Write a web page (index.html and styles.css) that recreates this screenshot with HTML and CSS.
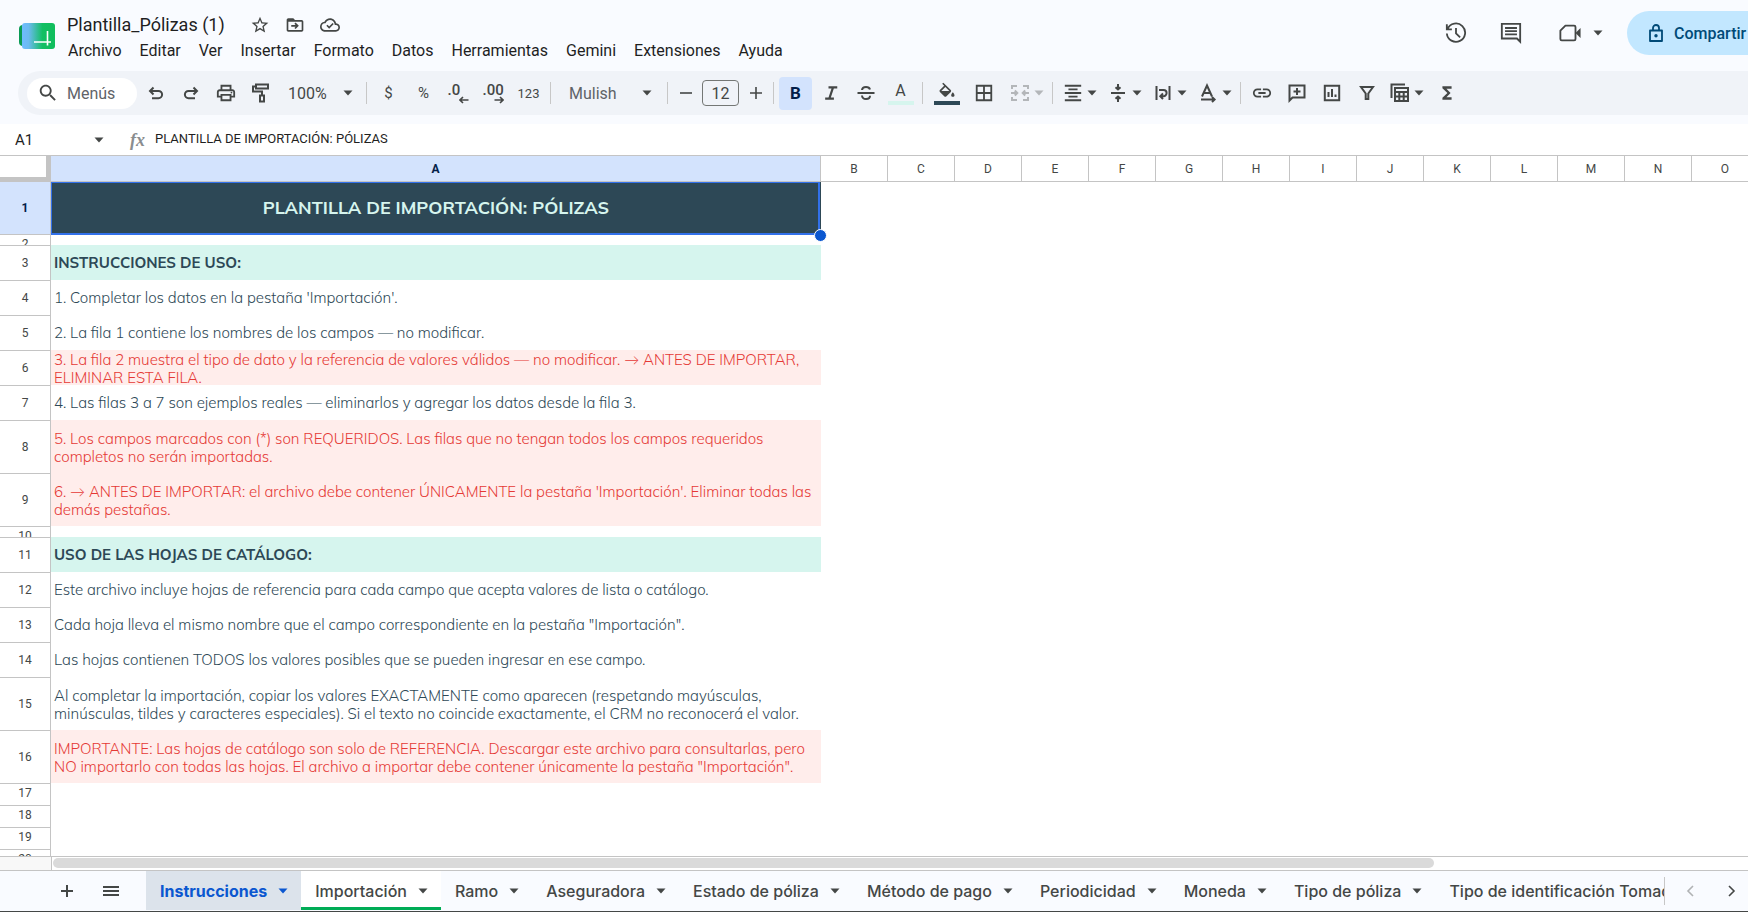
FILE: index.html
```html
<!DOCTYPE html>
<html lang="es">
<head>
    <meta charset="UTF-8">
    <title>Plantilla_Pólizas (1)</title>
    <link rel="stylesheet" href="styles.css">
</head>
<body>

<svg class="defs" aria-hidden="true">
    <symbol id="caret" viewBox="0 0 10 6"><path d="M0.5 0.5h9L5 5.5z"/></symbol>
</svg>

<div class="topbar">
    <header class="header">
        <svg class="logo" viewBox="0 0 36 26">
            <defs>
                <linearGradient id="logoFill" x1="0" y1="0" x2="1" y2="0">
                    <stop offset="0" stop-color="#6fbcff"/>
                    <stop offset="0.2" stop-color="#6cbaf0"/>
                    <stop offset="0.62" stop-color="#12bf63"/>
                    <stop offset="1" stop-color="#10bd5c"/>
                </linearGradient>
            </defs>
            <rect x="0" y="2" width="20" height="21" rx="4" fill="#0a9b55"/>
            <rect x="3" y="0" width="33" height="26" rx="3" fill="url(#logoFill)"/>
            <path d="M15 19h17M28.500 8v14.500" stroke="#fff" stroke-width="1.600" fill="none"/>
        </svg>
        <div class="doc">
            <div class="title-row">
                <h1>Plantilla_Pólizas (1)</h1>
                <button class="title-icon" aria-label="Destacar"><svg viewBox="0 0 24 24"><path d="M22 9.240l-7.190-.620L12 2 9.190 8.630 2 9.240l5.460 4.730L5.820 21 12 17.270 18.180 21l-1.630-7.030L22 9.240zM12 15.400l-3.760 2.270 1-4.280-3.320-2.880 4.380-.380L12 6.100l1.710 4.040 4.380.380-3.320 2.880 1 4.280L12 15.400z"/></svg></button>
                <button class="title-icon" aria-label="Mover"><svg viewBox="0 0 24 24"><path d="M20 6h-8l-2-2H4c-1.100 0-2 .9-2 2v12c0 1.100.9 2 2 2h16c1.100 0 2-.9 2-2V8c0-1.100-.9-2-2-2zm0 12H4V8h16v10z"/><path class="line" d="M7.500 13h7M12 9.800l3.200 3.200-3.200 3.200"/></svg></button>
                <button class="title-icon" aria-label="Guardado"><svg viewBox="0 0 24 24"><path d="M19.350 10.040C18.670 6.590 15.640 4 12 4 9.110 4 6.600 5.640 5.350 8.040 2.340 8.360 0 10.910 0 14c0 3.310 2.690 6 6 6h13c2.760 0 5-2.240 5-5 0-2.640-2.050-4.780-4.650-4.960zM19 18H6c-2.210 0-4-1.790-4-4 0-2.050 1.530-3.760 3.560-3.970l1.070-.110.5-.950C8.080 7.140 9.940 6 12 6c2.620 0 4.880 1.860 5.390 4.430l.3 1.500 1.530.110c1.560.1 2.780 1.410 2.780 2.960 0 1.650-1.350 3-3 3z"/><path class="line" d="M8.300 12.300l2.700 2.700 4.800-4.800"/></svg></button>
            </div>
            <nav class="menu">
                <button>Archivo</button>
                <button>Editar</button>
                <button>Ver</button>
                <button>Insertar</button>
                <button>Formato</button>
                <button>Datos</button>
                <button>Herramientas</button>
                <button>Gemini</button>
                <button>Extensiones</button>
                <button>Ayuda</button>
            </nav>
        </div>
        <div class="actions">
            <button class="action" aria-label="Historial"><svg viewBox="0 0 24 24"><path class="line" d="M2 2.500v5.500h5.500M2.800 7.600A10 10 0 1 1 2 12.500M12 6.500v6l4.500 4.300"/></svg></button>
            <button class="action" aria-label="Comentarios"><svg viewBox="0 0 24 24"><path class="line" d="M2 2h20v19.500L18.500 18H2zM5.500 6.500h13M5.500 10h13M5.500 13.500h13"/></svg></button>
            <button class="action meet" aria-label="Reunión"><svg viewBox="0 0 24 24"><path class="line" d="M7 4h9.500a1.500 1.500 0 0 1 1.500 1.500v13a1.500 1.500 0 0 1-1.500 1.500H3a1.500 1.500 0 0 1-1.500-1.500V9.500z" stroke-linejoin="round"/><path d="M18 12l5.500-5.500v11z"/></svg><svg class="caret"><use href="#caret"/></svg></button>
            <button class="share">
                <svg viewBox="0 0 14 18"><path d="M1 6.500h12v10.500H1zM4 6.500V4a3 3 0 0 1 6 0v2.500" fill="none" stroke="#004a77" stroke-width="1.800" stroke-linejoin="round"/><circle cx="7" cy="11.700" r="1.700" fill="#004a77"/></svg>
                Compartir
            </button>
        </div>
    </header>

    <div class="toolbar">
        <label class="search">
            <svg viewBox="0 0 24 24"><path d="M15.500 14h-.790l-.280-.270C15.410 12.590 16 11.110 16 9.500 16 5.910 13.090 3 9.500 3S3 5.910 3 9.500 5.910 16 9.500 16c1.610 0 3.090-.590 4.230-1.570l.270.280v.790l5 4.990L20.490 19l-4.990-5zm-6 0C7.010 14 5 11.990 5 9.500S7.010 5 9.500 5 14 7.010 14 9.500 11.990 14 9.500 14z"/></svg>
            <input type="text" placeholder="Menús" aria-label="Menús">
        </label>
        <button class="tool" aria-label="Deshacer"><svg viewBox="0 0 20 20"><path class="line" d="M7.500 4.500L4 8l3.500 3.500M4 8h8.500a3.600 3.600 0 0 1 0 7.200H6"/></svg></button>
        <button class="tool" aria-label="Rehacer"><svg viewBox="0 0 20 20"><path class="line" d="M12.500 4.500L16 8l-3.500 3.500M16 8H7.500a3.600 3.600 0 0 0 0 7.200H14"/></svg></button>
        <button class="tool" aria-label="Imprimir"><svg viewBox="1 1 22 22"><path d="M19 8h-1V3H6v5H5c-1.660 0-3 1.340-3 3v6h4v4h12v-4h4v-6c0-1.660-1.340-3-3-3zM8 5h8v3H8V5zm8 12v2H8v-4h8v2zm2-2v-2H6v2H4v-4c0-.550.450-1 1-1h14c.550 0 1 .450 1 1v4h-2z"/><circle cx="18" cy="11.500" r="1"/></svg></button>
        <button class="tool" aria-label="Copiar formato"><svg viewBox="0 0 20 20"><path class="line" d="M5 1.500h12v4H5zM5 3.500H2v5h9v4M9 12.500h4v6H9z"/></svg></button>
        <label class="drop zoom">
            <select aria-label="Zoom"><option>100%</option></select>
            <svg class="caret"><use href="#caret"/></svg>
        </label>
        <span class="sep"></span>
        <button class="tool symbol">$</button>
        <button class="tool symbol">%</button>
        <button class="tool decimals" aria-label="Menos decimales"><span>.0</span><svg viewBox="0 0 10 8"><path class="thin" d="M4 1L1 4l3 3M1 4h8.500"/></svg></button>
        <button class="tool decimals" aria-label="Más decimales"><span>.00</span><svg viewBox="0 0 10 8"><path class="thin" d="M6 1l3 3-3 3M9 4H.5"/></svg></button>
        <button class="tool small">123</button>
        <span class="sep"></span>
        <label class="drop font">
            <select aria-label="Fuente"><option>Mulish</option></select>
            <svg class="caret"><use href="#caret"/></svg>
        </label>
        <span class="sep"></span>
        <button class="step" aria-label="Reducir"><svg viewBox="0 0 12 12"><path class="thin" d="M0 6h12"/></svg></button>
        <input class="font-size" type="text" value="12" aria-label="Tamaño de fuente">
        <button class="step" aria-label="Aumentar"><svg viewBox="0 0 12 12"><path class="thin" d="M0 6h12M6 0v12"/></svg></button>
        <span class="sep"></span>
        <button class="tool active">B</button>
        <button class="tool" aria-label="Cursiva"><svg viewBox="0 0 24 24"><path d="M9 4v2.500h3.600L9 17.500H5V20h10.500v-2.500h-3.700l3.600-11H19.500V4z"/></svg></button>
        <button class="tool" aria-label="Tachado"><svg viewBox="0 0 20 20"><path class="line" d="M1.500 10h17M14 6.500C13.500 4.700 12 4 10 4 7.700 4 6.200 5 6 7M6 12.500c.2 2.300 1.800 3.500 4 3.500s4-1 4-3.200"/></svg></button>
        <button class="tool color text-color"><span>A</span></button>
        <span class="sep"></span>
        <button class="tool color fill-color" aria-label="Color de relleno"><svg viewBox="0 0 24 20"><path d="M16.560 8.940L7.620 0 6.210 1.410l2.380 2.380-5.150 5.150c-.590.590-.590 1.540 0 2.120l5.500 5.500c.290.290.680.440 1.060.440s.770-.150 1.060-.440l5.500-5.500c.590-.580.590-1.530 0-2.120zM5.210 10L10 5.210 14.790 10H5.210zM19 11.500s-2 2.170-2 3.500c0 1.100.9 2 2 2s2-.9 2-2c0-1.330-2-3.500-2-3.500z"/></svg></button>
        <button class="tool" aria-label="Bordes"><svg viewBox="1 1 22 22"><path d="M3 3v18h18V3H3zm8 16H5v-6h6v6zm0-8H5V5h6v6zm8 8h-6v-6h6v6zm0-8h-6V5h6v6z"/></svg></button>
        <button class="split merge" aria-label="Combinar" disabled><svg viewBox="0 0 20 20"><path class="line" d="M7 3H2v3M7 17H2v-3M13 3h5v3M13 17h5v-3M1 10h6M4.800 7.500L7.300 10l-2.500 2.500M19 10h-6M15.200 7.500L12.700 10l2.500 2.500"/></svg><svg class="caret"><use href="#caret"/></svg></button>
        <span class="sep"></span>
        <button class="split" aria-label="Alineación horizontal"><svg viewBox="1 1 22 22"><path d="M7 15v2h10v-2H7zm-4 6h18v-2H3v2zm0-8h18v-2H3v2zm4-6v2h10V7H7zM3 3v2h18V3H3z"/></svg><svg class="caret"><use href="#caret"/></svg></button>
        <button class="split" aria-label="Alineación vertical"><svg viewBox="0 0 20 20"><path class="line" d="M3 10h14M10 1v5M10 19v-5M7.500 4.200L10 6.500l2.500-2.300M7.500 15.800L10 13.500l2.500 2.300"/></svg><svg class="caret"><use href="#caret"/></svg></button>
        <button class="split" aria-label="Ajuste de texto"><svg viewBox="0 0 20 20"><path class="line" d="M3.500 3v14M16.500 3v14M6 7h4.500a3 3 0 0 1 0 6.200H7.500M10 10.500l-2.700 2.700L10 16"/></svg><svg class="caret"><use href="#caret"/></svg></button>
        <button class="split" aria-label="Rotación de texto"><svg viewBox="0 0 20 20"><path class="line" d="M4 13.500L9 2.500l5 11M5.800 10h6.400M3 16.500h13M14 14l2.600 2.500L14 19"/></svg><svg class="caret"><use href="#caret"/></svg></button>
        <span class="sep tight"></span>
        <button class="tool" aria-label="Vínculo"><svg viewBox="1 1 22 22"><path d="M3.900 12c0-1.710 1.390-3.100 3.100-3.100h4V7H7c-2.760 0-5 2.240-5 5s2.240 5 5 5h4v-1.900H7c-1.710 0-3.100-1.390-3.100-3.100zM8 13h8v-2H8v2zm9-6h-4v1.900h4c1.710 0 3.100 1.390 3.100 3.100s-1.390 3.100-3.100 3.100h-4V17h4c2.760 0 5-2.240 5-5s-2.240-5-5-5z"/></svg></button>
        <button class="tool" aria-label="Comentario"><svg viewBox="0 0 20 20"><path class="line" d="M2.500 17.500v-15h15v12h-12zM10 5v7M6.500 8.500h7"/></svg></button>
        <button class="tool" aria-label="Gráfico"><svg viewBox="0 0 20 20"><path class="line" d="M2.800 2.800h14.400v14.400H2.800zM6.500 9v5M10 6v8M13.500 11.500V14"/></svg></button>
        <button class="tool" aria-label="Filtro"><svg viewBox="0 0 20 20"><path class="line" d="M4 4h12l-4.700 6.500V16H8.700v-5.500z"/></svg></button>
        <button class="split" aria-label="Tabla"><svg viewBox="0 0 20 20"><path class="line" d="M1.500 15V1.500H15M5 5h13v13H5zM5 9h13M5 13.500h13M9.300 9v9M13.700 9v9"/></svg><svg class="caret"><use href="#caret"/></svg></button>
        <button class="tool" aria-label="Funciones"><svg viewBox="0 0 24 24"><path d="M17.500 4H6.500v2.200l6 5.800-6 5.800V20h11v-3h-6.200l5-5-5-5h6.200z"/></svg></button>
    </div>
</div>

<div class="formula-bar">
    <label class="name-box">
        <input type="text" value="A1" aria-label="Celda">
        <svg class="caret"><use href="#caret"/></svg>
    </label>
    <span class="fx">fx</span>
    <input class="formula" type="text" value="PLANTILLA DE IMPORTACIÓN: PÓLIZAS" aria-label="Fórmula">
</div>

<main class="grid">
    <table>
        <colgroup>
            <col class="col-rows"><col class="col-a">
            <col><col><col><col><col><col><col><col><col><col><col><col><col><col>
        </colgroup>
        <thead>
            <tr>
                <th class="corner"></th>
                <th class="selected">A</th>
                <th>B</th><th>C</th><th>D</th><th>E</th><th>F</th><th>G</th><th>H</th>
                <th>I</th><th>J</th><th>K</th><th>L</th><th>M</th><th>N</th><th>O</th>
            </tr>
        </thead>
        <tbody>
            <tr class="first tall">
                <th class="selected">1</th>
                <td class="banner">PLANTILLA DE IMPORTACIÓN: PÓLIZAS<div class="selection"></div></td>
                <td colspan="14"></td>
            </tr>
            <tr class="gap"><th><div>2</div></th><td></td></tr>
            <tr><th>3</th><td class="section">INSTRUCCIONES DE USO:</td></tr>
            <tr><th>4</th><td>1. Completar los datos en la pestaña 'Importación'.</td></tr>
            <tr><th>5</th><td>2. La fila 1 contiene los nombres de los campos — no modificar.</td></tr>
            <tr><th>6</th><td class="warning"><p>3. La fila 2 muestra el tipo de dato y la referencia de valores válidos — no modificar. → ANTES DE IMPORTAR,<br>ELIMINAR ESTA FILA.</p></td></tr>
            <tr><th>7</th><td>4. Las filas 3 a 7 son ejemplos reales — eliminarlos y agregar los datos desde la fila 3.</td></tr>
            <tr class="tall"><th>8</th><td class="warning">5. Los campos marcados con (*) son REQUERIDOS. Las filas que no tengan todos los campos requeridos<br>completos no serán importadas.</td></tr>
            <tr class="tall"><th>9</th><td class="warning">6. → ANTES DE IMPORTAR: el archivo debe contener ÚNICAMENTE la pestaña 'Importación'. Eliminar todas las<br>demás pestañas.</td></tr>
            <tr class="gap"><th><div>10</div></th><td></td></tr>
            <tr><th>11</th><td class="section">USO DE LAS HOJAS DE CATÁLOGO:</td></tr>
            <tr><th>12</th><td>Este archivo incluye hojas de referencia para cada campo que acepta valores de lista o catálogo.</td></tr>
            <tr><th>13</th><td>Cada hoja lleva el mismo nombre que el campo correspondiente en la pestaña "Importación".</td></tr>
            <tr><th>14</th><td>Las hojas contienen TODOS los valores posibles que se pueden ingresar en ese campo.</td></tr>
            <tr class="tall"><th>15</th><td>Al completar la importación, copiar los valores EXACTAMENTE como aparecen (respetando mayúsculas,<br>minúsculas, tildes y caracteres especiales). Si el texto no coincide exactamente, el CRM no reconocerá el valor.</td></tr>
            <tr class="tall"><th>16</th><td class="warning">IMPORTANTE: Las hojas de catálogo son solo de REFERENCIA. Descargar este archivo para consultarlas, pero<br>NO importarlo con todas las hojas. El archivo a importar debe contener únicamente la pestaña "Importación".</td></tr>
            <tr class="short"><th>17</th><td></td></tr>
            <tr class="short"><th>18</th><td></td></tr>
            <tr class="short"><th>19</th><td></td></tr>
            <tr class="short"><th>20</th><td></td></tr>
        </tbody>
    </table>
</main>

<div class="scroll-row">
    <div class="scroll-corner"></div>
    <div class="scroll-track"><div class="scroll-thumb"></div></div>
</div>

<footer class="sheets">
    <button class="sheet-icon" aria-label="Añadir hoja"><svg viewBox="0 0 16 16"><path class="line" d="M2 8h12M8 2v12"/></svg></button>
    <button class="sheet-icon" aria-label="Todas las hojas"><svg viewBox="0 0 16 16"><path class="line" d="M0 4h16M0 8h16M0 12h16"/></svg></button>
    <div class="tabs">
        <button class="tab current">Instrucciones<svg class="caret"><use href="#caret"/></svg></button>
        <button class="tab green">Importación<svg class="caret"><use href="#caret"/></svg></button>
        <button class="tab">Ramo<svg class="caret"><use href="#caret"/></svg></button>
        <button class="tab">Aseguradora<svg class="caret"><use href="#caret"/></svg></button>
        <button class="tab">Estado de póliza<svg class="caret"><use href="#caret"/></svg></button>
        <button class="tab">Método de pago<svg class="caret"><use href="#caret"/></svg></button>
        <button class="tab">Periodicidad<svg class="caret"><use href="#caret"/></svg></button>
        <button class="tab">Moneda<svg class="caret"><use href="#caret"/></svg></button>
        <button class="tab">Tipo de póliza<svg class="caret"><use href="#caret"/></svg></button>
        <button class="tab">Tipo de identificación Tomador<svg class="caret"><use href="#caret"/></svg></button>
    </div>
    <div class="pager">
        <button aria-label="Anterior" disabled><svg viewBox="0 0 8 12"><path class="thin" d="M7 1L2 6l5 5"/></svg></button>
        <button aria-label="Siguiente"><svg viewBox="0 0 8 12"><path class="thin" d="M1 1l5 5-5 5"/></svg></button>
    </div>
</footer>

</body>
</html>
```
FILE: styles.css
```css
* {
    box-sizing: border-box;
}
body {
    margin: 0;
    height: 100vh;
    display: flex;
    flex-direction: column;
    overflow: hidden;
    background: #fff;
    color: #1f1f1f;
    font-family: Roboto, Arial, sans-serif;
    font-size: 16px;
}
button, input, select {
    font: inherit;
    color: inherit;
    border: 0;
    padding: 0;
    margin: 0;
    background: none;
}
input, select {
    outline: none;
    min-width: 0;
}
select {
    appearance: none;
}
svg {
    display: block;
    flex: none;
    fill: #444746;
}
.defs {
    position: absolute;
    width: 0;
    height: 0;
}
.line, .thin {
    fill: none;
    stroke: #444746;
    stroke-width: 2;
}
.thin {
    stroke-width: 1.6;
}
.caret {
    width: 10px;
    height: 6px;
}

/* header */
.topbar {
    margin-right: -60px;
    padding-bottom: 9px;
    background: #f9fbff;
}
.header {
    display: flex;
    height: 71px;
    padding-left: 19px;
}
.logo {
    width: 36px;
    height: 26px;
    margin-top: 23px;
}
.doc {
    margin: 10px 0 0 4px;
}
.title-row {
    display: flex;
    align-items: center;
    height: 29px;
    padding-left: 8px;
}
h1 {
    margin: 0 25px 0 0;
    font-size: 18px;
    font-weight: 400;
}
.title-icon {
    width: 35px;
}
.title-icon svg {
    width: 20px;
    height: 20px;
}
.menu {
    display: flex;
}
.menu button {
    height: 22px;
    padding: 0 9px;
}
.actions {
    display: flex;
    align-items: center;
    height: 44px;
    margin: 11px 0 0 auto;
}
.action {
    display: flex;
    align-items: center;
    margin-right: 33px;
}
.action svg {
    width: 22px;
    height: 22px;
}
.action.meet {
    gap: 12px;
    margin: 0 24px 0 4px;
}
.action .caret {
    width: 10px;
    height: 6px;
}
.share {
    display: flex;
    align-items: center;
    gap: 11px;
    width: 181px;
    height: 44px;
    padding-left: 22px;
    border-radius: 22px;
    background: #c2e7ff;
    color: #004a77;
    font-weight: 500;
}
.share svg {
    width: 14px;
    height: 18px;
}

/* toolbar */
.toolbar {
    display: flex;
    align-items: center;
    height: 44px;
    margin-left: 18px;
    padding-left: 9px;
    border-radius: 22px;
    background: #f0f3f8;
    color: #444746;
}
.search {
    display: flex;
    align-items: center;
    gap: 8px;
    width: 110px;
    height: 31px;
    margin-right: 1px;
    padding-left: 10px;
    border-radius: 16px;
    background: #fff;
}
.search svg {
    width: 22px;
    height: 22px;
}
.search input {
    width: 60px;
}
.search input::placeholder {
    color: #5f6368;
    opacity: 1;
}
.tool {
    display: flex;
    align-items: center;
    justify-content: center;
    width: 33px;
    height: 33px;
    margin: 0 1px;
    border-radius: 4px;
}
.tool svg, .split svg:first-child {
    width: 20px;
    height: 20px;
}
.tool.symbol {
    font-size: 15px;
}
.tool.small {
    font-size: 13px;
}
.tool.active {
    background: #d3e3fd;
    color: #041e49;
    font-weight: 700;
    font-size: 17px;
}
.decimals {
    flex-direction: column;
    line-height: 14px;
    font-size: 15px;
    font-weight: 500;
}
.tool.decimals svg {
    align-self: flex-end;
    width: 10px;
    height: 8px;
    margin: -1px 6px 0 0;
}
.decimals span {
    width: 22px;
    text-align: left;
}
.tool.color {
    flex-direction: column;
    justify-content: flex-start;
    padding-top: 5px;
}
.tool.color::after {
    content: "";
    width: 26px;
    height: 4px;
    margin-top: auto;
    margin-bottom: 5px;
    background: #2d4856;
}
.text-color span {
    line-height: 18px;
}
.tool.text-color::after {
    background: #d6f5ee;
}
.tool.fill-color {
    width: 37px;
}
.fill-color svg {
    height: 18px;
}
.sep {
    width: 1px;
    height: 22px;
    margin: 0 4px;
    background: #c7c7c7;
}
.sep.tight {
    margin: 0 3px;
}
.drop {
    display: flex;
    align-items: center;
    height: 33px;
}
.drop select {
    flex: 1;
}
.zoom {
    width: 84px;
    padding: 0 9px 0 10px;
}
.font {
    width: 108px;
    padding: 0 11px 0 14px;
    color: #5f6368;
}
.step {
    display: flex;
    justify-content: center;
    width: 27px;
}
.step svg {
    width: 12px;
    height: 12px;
}
.font-size {
    width: 37px;
    height: 26px;
    margin: 0 3px;
    border: 1px solid #747775;
    border-radius: 4px;
    text-align: center;
}
.split {
    display: flex;
    align-items: center;
    width: 43px;
    height: 33px;
    margin: 0 1px;
    padding-left: 5px;
    gap: 4px;
}
.split .caret {
    width: 10px;
}
.merge {
    width: 45px;
    padding-left: 8px;
    opacity: 0.35;
}

/* formula bar */
.formula-bar {
    display: flex;
    align-items: center;
    height: 31px;
    font-size: 13px;
}
.name-box {
    display: flex;
    align-items: center;
    width: 104px;
    padding-left: 15px;
}
.name-box input {
    flex: 1;
    font-size: 15px;
}
.fx {
    width: 51px;
    padding-left: 26px;
    color: #8a8d8f;
    font: italic bold 18px/24px "Liberation Serif", serif;
}
.formula {
    flex: 1;
    padding-bottom: 2px;
}

/* grid */
.grid {
    flex: 1;
    min-height: 0;
    overflow: hidden;
    border-top: 1px solid #c4c4c4;
}
table {
    width: 1759px;
    table-layout: fixed;
    border-collapse: separate;
    border-spacing: 0;
}
.col-rows {
    width: 51px;
}
.col-a {
    width: 770px;
}
th, td {
    padding: 0;
}
th {
    border-right: 1px solid #c4c4c4;
    color: #444746;
    font-size: 12px;
    font-weight: 400;
}
thead th {
    height: 25px;
}
tbody th {
    border-top: 1px solid #c4c4c4;
}
th.corner {
    border-right: 5px solid #c4c4c4;
    border-bottom: 4px solid #c4c4c4;
}
th.selected {
    background: #d3e3fd;
    color: #041e49;
    font-weight: 700;
}
tbody tr {
    height: 35px;
}
tbody tr.tall {
    height: 53px;
}
tbody tr.gap {
    height: 11px;
}
tbody tr.short {
    height: 22px;
}
.gap div {
    height: 10px;
    overflow: hidden;
    line-height: 18px;
}
.short th {
    vertical-align: top;
    line-height: 19px;
}
.first td {
    border-top: 1px solid #c4c4c4;
}
td {
    padding-left: 3px;
    color: #2d4856;
    font-family: Mulish, Lato, sans-serif;
    font-size: 15px;
    font-weight: 350;
    line-height: 18px;
    white-space: nowrap;
}
.tall td {
    padding-top: 2px;
}
td p {
    margin: 0 0 -2px;
}
.tall td.banner {
    position: relative;
    padding: 0;
    background: #2d4856;
    color: #d6f5ee;
    font-size: 18px;
    font-weight: 700;
    text-align: center;
}
td.section {
    background: #d6f5ee;
    font-weight: 700;
}
td.warning {
    background: #ffedeb;
    color: #e53935;
}
.selection {
    position: absolute;
    inset: 0 1px -1px 0;
    border: 1px solid #3271ea;
    border-width: 1px 2px 2px 1px;
}
.selection::after {
    content: "";
    position: absolute;
    right: -9px;
    bottom: -9px;
    width: 11px;
    height: 11px;
    border: 1px solid #fff;
    border-radius: 50%;
    background: #0b57d0;
}

/* scrollbar */
.scroll-row {
    display: flex;
    height: 15px;
    border-top: 1px solid #c4c4c4;
    border-bottom: 1px solid #c4c4c4;
}
.scroll-corner {
    width: 52px;
    border-right: 1px solid #c4c4c4;
    background: #f8f8f8;
}
.scroll-track {
    flex: 1;
    padding: 1px;
}
.scroll-thumb {
    width: 81.5%;
    height: 10px;
    border-radius: 5px;
    background: #dadada;
}

/* sheet tabs */
.sheets {
    display: flex;
    height: 41px;
    padding-left: 45px;
    border-bottom: 1px solid #444746;
    background: #f9fbff;
    color: #444746;
    font-family: Inter, sans-serif;
    font-size: 16px;
    font-weight: 500;
}
.sheet-icon {
    display: flex;
    align-items: center;
    justify-content: center;
    width: 44px;
}
.sheet-icon svg {
    width: 16px;
    height: 16px;
}
.tabs {
    display: flex;
    flex: 1;
    min-width: 0;
    margin: 0 0 1px 13px;
    overflow: hidden;
}
.tab {
    display: flex;
    flex: none;
    align-items: center;
    gap: 11px;
    padding: 0 13px 0 14px;
}
.tab.current {
    background: #dce3eb;
    color: #0b57d0;
    font-weight: 700;
}
.tab.current svg {
    fill: #0b57d0;
}
.tab.green {
    background: #fff;
    box-shadow: inset 0 -3px #00ac56;
}
.pager {
    display: flex;
    align-items: center;
    gap: 34px;
    height: 28px;
    margin-top: 6px;
    padding: 0 12px 0 21px;
    border-left: 1px solid #c7c7c7;
}
.pager svg {
    width: 8px;
    height: 12px;
}
.pager button:disabled {
    opacity: 0.4;
}
```
